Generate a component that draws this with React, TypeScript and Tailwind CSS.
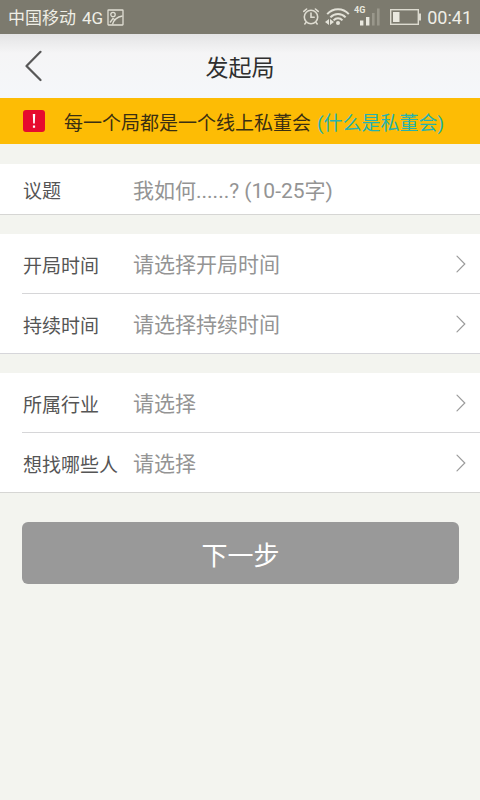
import { useState } from "react";

type Option = { value: string; label: string };

function BackIcon() {
  return (
    <svg width="18" height="32" viewBox="0 0 18 32" fill="none" stroke="#585858" strokeWidth="2.2" strokeLinecap="round" strokeLinejoin="round" aria-hidden="true">
      <path d="M16.5 1.8 2.5 16 16.5 30" />
    </svg>
  );
}

function ArrowIcon() {
  return (
    <svg className="pointer-events-none shrink-0" width="10" height="18" viewBox="0 0 10 18" fill="none" stroke="#9b9b9b" strokeWidth="1.2" strokeLinecap="round" aria-hidden="true">
      <path d="M1 1.2 8.8 9 1 16.8" />
    </svg>
  );
}

function StatusBar() {
  return (
    <div className="flex h-[34px] items-center justify-between bg-[#7c7a6e] pl-2 pr-2 text-[#efeee6]">
      <div className="flex items-center gap-1">
        <p className="flex gap-1.5 pt-0.5 text-[17px] leading-6">
          <span>中国移动</span>
          <span>4G</span>
        </p>
        <svg width="17" height="17" viewBox="0 0 17 17" fill="none" stroke="#dfded3" strokeWidth="1.3" aria-hidden="true">
          <rect x="1" y="1" width="15" height="15" rx="0.5" />
          <circle cx="6" cy="5.5" r="2.2" />
          <path d="M3 13.5 6 9.5 8.2 11M5.5 15.5C6.5 11.5 9.5 8 15.5 7" />
        </svg>
      </div>
      <div className="flex items-center">
        <svg width="126" height="26" viewBox="0 0 126 26" fill="none" aria-hidden="true">
          {/* alarm clock */}
          <g stroke="#dedcd1" strokeWidth="1.6" strokeLinecap="round">
            <circle cx="10" cy="13" r="6.7" />
            <path d="M10 9v4.3h3.2M2.8 7.4 5.6 5M17.2 7.4 14.4 5M5 18.6 3.8 20M15 18.6l1.2 1.4" />
          </g>
          {/* wifi */}
          <g stroke="#e3e2d8" strokeWidth="2">
            <path d="M26.2 10.2C32 3.6 42 3.6 47.8 10.2" />
            <path d="M29.4 13.4C33.6 8.8 40.4 8.8 44.6 13.4" />
            <path d="M32.6 16.4C35 13.6 39 13.6 41.4 16.4" />
          </g>
          <circle cx="37" cy="19" r="2" fill="#e3e2d8" />
          <path d="m24 18 4-3v6zM33 18l-4-3v6z" fill="#e3e2d8" />
          {/* signal */}
          <text x="53" y="8.5" fill="#e9e8df" fontFamily="Roboto, sans-serif" fontSize="9" fontWeight="700">4G</text>
          <path d="M59 16.5h3.4v5H59zM65 13h3.4v8.500H65z" fill="#e9e8df" />
          <path d="M71 9h2.600v12.500H71zM76 4.500h2.600v17H76z" fill="#99978b" />
          {/* battery */}
          <rect x="89.7" y="5.7" width="27.6" height="14.600" stroke="#dddbd0" strokeWidth="1.4" />
          <path d="M118 9.500h2v7h-2z" fill="#dddbd0" />
          <path d="M92 8h6.500v10H92z" fill="#e9e8df" />
        </svg>
        <span className="pt-0.5 text-[18px] leading-6">00:41</span>
      </div>
    </div>
  );
}

function SelectRow({ id, label, placeholder, options }: { id: string; label: string; placeholder: string; options: Option[] }) {
  const [value, setValue] = useState("");

  return (
    <div className="ml-[23px] flex h-[59px] items-center pr-[14px]">
      <label htmlFor={id} className="w-[110px] shrink-0 pt-1.5 text-[19px] leading-7 text-[#555555]">{label}</label>
      <select
        id={id}
        value={value}
        onChange={(e) => setValue(e.target.value)}
        className="h-full min-w-0 flex-1 appearance-none bg-transparent pt-1 text-[21px] text-[#949494] outline-none"
      >
        <option value="">{placeholder}</option>
        {options.map((o) => (
          <option key={o.value} value={o.value}>{o.label}</option>
        ))}
      </select>
      <ArrowIcon />
    </div>
  );
}

const Divider = () => <hr className="ml-[22px] border-t border-[#d6d6d8]" />;

export default function App() {
  const [topic, setTopic] = useState("");

  return (
    <div className="min-h-screen bg-[#f3f4ef] font-[Roboto,'Noto_Sans_CJK_SC',sans-serif]">
      <StatusBar />

      <header className="grid h-16 grid-cols-[1fr_auto_1fr] items-center bg-linear-to-b from-[#e4e4e5] via-[#f5f5f6] via-30% to-[#f5f7fa] px-6">
        <button type="button" aria-label="返回" className="justify-self-start">
          <BackIcon />
        </button>
        <h1 className="pt-1.5 text-[23px] leading-8 text-[#2f2f2f]">发起局</h1>
      </header>

      <div className="flex h-[46px] items-center bg-[#fdbc05] pl-[23px] text-[19px] text-[#3a2f12]">
        <span className="mr-[19px] flex size-[22px] items-center justify-center rounded-[3px] bg-[#e60b2e]">
          <svg width="4" height="14" viewBox="0 0 4 14" fill="#ffffff" aria-hidden="true">
            <path d="M.8 0h2.400L2.800 9.500H1.200zM.9 11.500h2.200v2.200H.9z" />
          </svg>
        </span>
        <p className="flex gap-1.5 whitespace-nowrap pt-1.5">
          <span>每一个局都是一个线上私董会</span>
          <a href="#about" className="text-[#26b2ae]">(什么是私董会)</a>
        </p>
      </div>

      <form onSubmit={(e) => e.preventDefault()}>
        <div className="mt-5 border-b border-[#d6d6d4] bg-white">
          <div className="ml-[23px] flex h-[50px] items-center pr-[14px]">
            <label htmlFor="topic" className="w-[110px] shrink-0 pt-1.5 text-[19px] leading-7 text-[#555555]">议题</label>
            <input
              id="topic"
              type="text"
              maxLength={25}
              value={topic}
              onChange={(e) => setTopic(e.target.value)}
              placeholder="我如何......? (10-25字)"
              className="h-full min-w-0 flex-1 bg-transparent pt-1 text-[21px] text-[#555555] outline-none placeholder:text-[#949494]"
            />
          </div>
        </div>

        <div className="mt-[19px] border-b border-[#d6d6da] bg-white">
          <SelectRow id="start" label="开局时间" placeholder="请选择开局时间" options={[{ value: "today", label: "今天" }, { value: "tomorrow", label: "明天" }]} />
          <Divider />
          <SelectRow id="duration" label="持续时间" placeholder="请选择持续时间" options={[{ value: "1", label: "1天" }, { value: "3", label: "3天" }]} />
        </div>

        <div className="mt-[19px] border-b border-[#d6d6d4] bg-white">
          <SelectRow id="industry" label="所属行业" placeholder="请选择" options={[{ value: "it", label: "互联网" }, { value: "finance", label: "金融" }]} />
          <Divider />
          <SelectRow id="people" label="想找哪些人" placeholder="请选择" options={[{ value: "founder", label: "创始人" }, { value: "investor", label: "投资人" }]} />
        </div>

        <div className="mt-[29px] pl-[22px] pr-[21px]">
          <button type="submit" className="h-[62px] w-full rounded-md bg-[#999999] pt-1.5 text-[26px] text-white">下一步</button>
        </div>
      </form>
    </div>
  );
}
